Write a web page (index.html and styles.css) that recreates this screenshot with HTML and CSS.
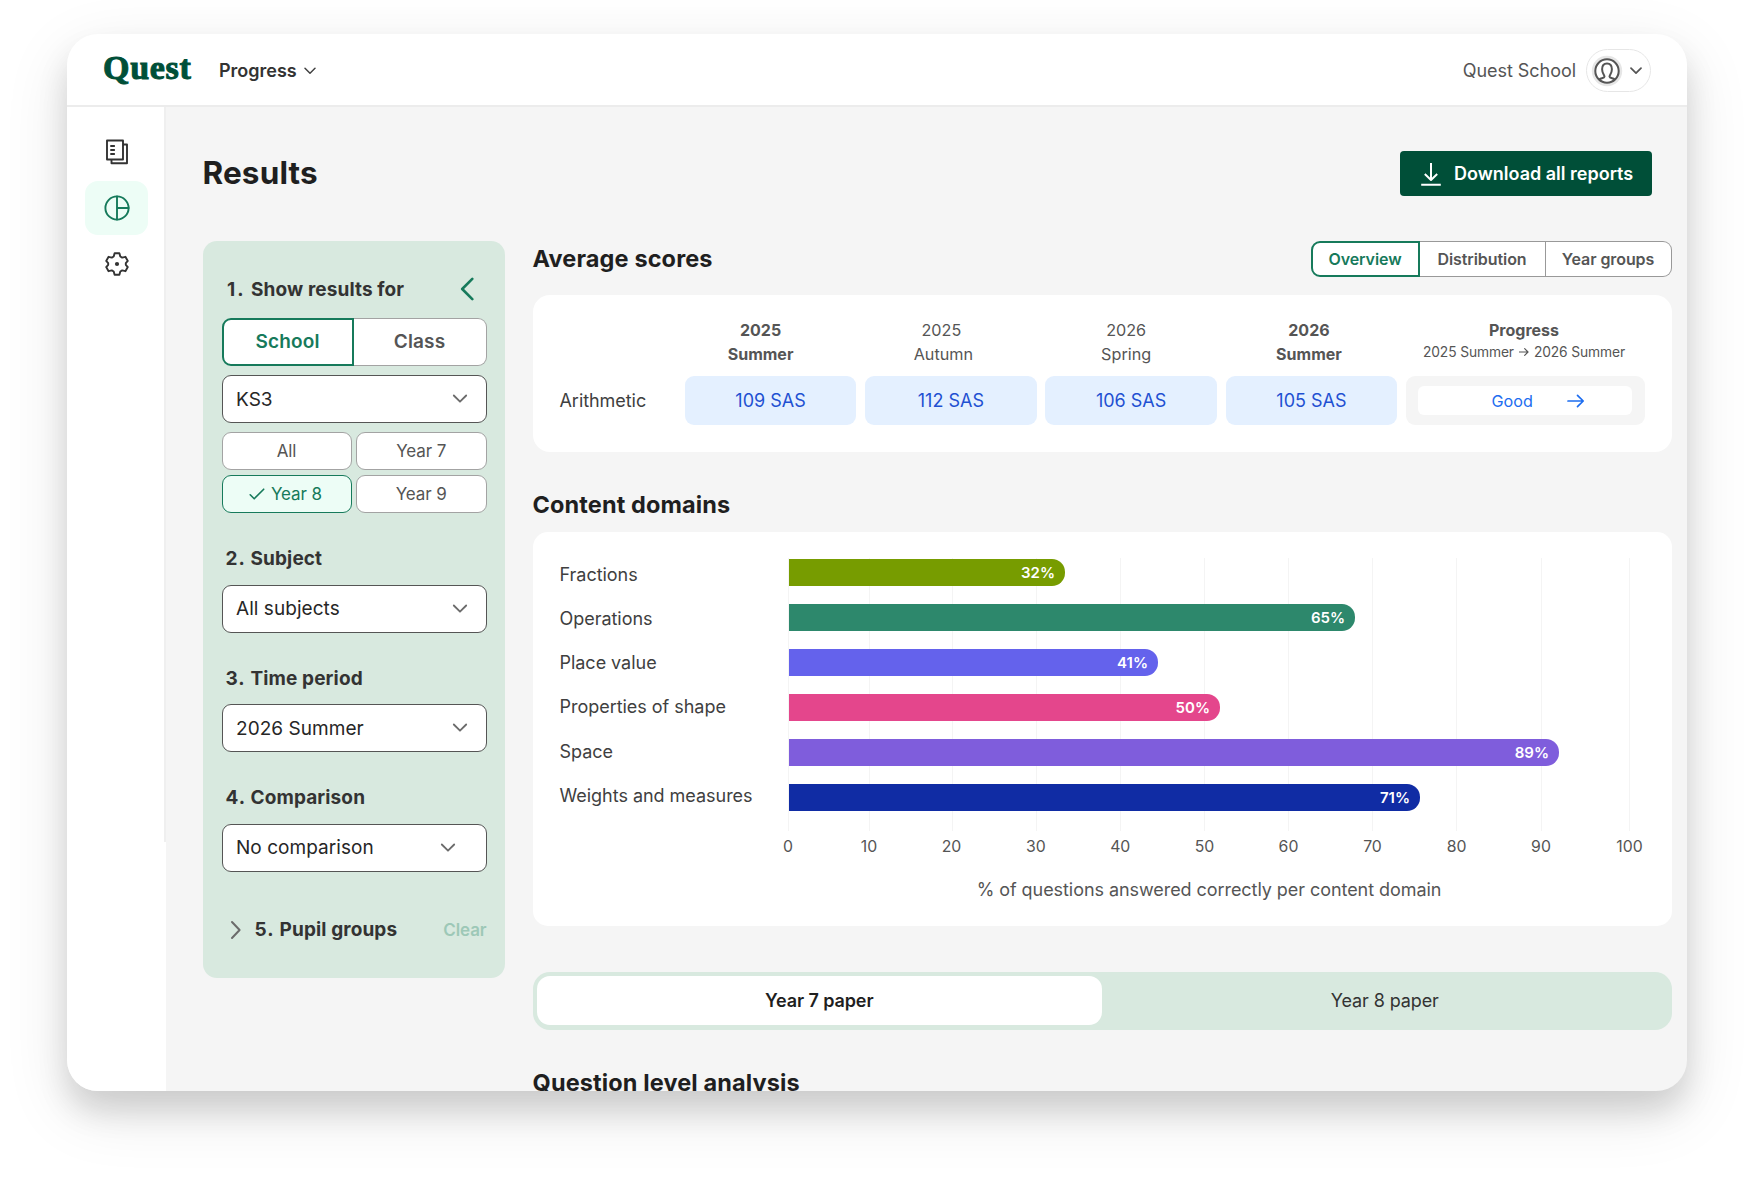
FILE: index.html
```html
<!DOCTYPE html>
<html lang="en">
<head>
<meta charset="utf-8">
<title>Quest – Results</title>
<link rel="stylesheet" href="styles.css">
</head>
<body>
<div class="window">
  <header class="topbar">
    <span class="logo">Quest</span>
    <span class="product">Progress</span>
    <svg class="product-chev" width="12" height="8" viewBox="0 0 12 8"><path d="M1 1.200l5 5 5-5"/></svg>
    <span class="school">Quest School</span>
    <div class="account">
      <svg width="32" height="32" viewBox="0 0 32 32"><circle class="halo" cx="16" cy="16" r="15.200"/><circle class="ring" cx="16" cy="16" r="11.700"/><path class="person" d="M8.600 24.200c1.200-1.200 4.700-1 4.900-2.600.1-1.300-2.400-3.200-2.400-7.400 0-3.700 1.900-5.800 4.900-5.800s4.900 2.100 4.900 5.800c0 4.200-2.500 6.100-2.400 7.400.2 1.600 3.700 1.400 4.900 2.600"/></svg>
      <svg class="account-chev" width="12" height="8" viewBox="0 0 12 8"><path d="M1 1.200l5 5 5-5"/></svg>
    </div>
  </header>
  <div class="body">
    <nav class="rail">
      <a class="rail-item"><svg width="24" height="26" viewBox="0 0 24 26"><path d="M2 1.500h16v19h-16zM18 5.500h4v18.800h-15.500v-3.800M6 7h3.200M6 11h3.200M6 15h3.200"/></svg></a>
      <a class="rail-item active"><svg width="26" height="26" viewBox="0 0 26 26"><circle cx="13" cy="13" r="11.600"/><path d="M13 1.400v23.200M13 13h11.600"/></svg></a>
      <a class="rail-item"><svg width="26" height="26" viewBox="0 0 26 26"><path d="M10.600 2.300h4.800l.9 3.200 1.900 1.100 3.200-.8 2.400 4.100-2 2.300v1.600l2 2.300-2.400 4.100-3.200-.8-1.900 1.100-.9 3.200h-4.800l-.9-3.200-1.900-1.100-3.200.8-2.400-4.100 2-2.300v-1.600l-2-2.300 2.400-4.100 3.200.8 1.900-1.100z"/><circle class="dot" cx="13" cy="13" r="2.100"/></svg></a>
    </nav>
    <div class="rail-edge"></div>
    <main class="content">
      <div class="title-row">
        <h1>Results</h1>
        <button class="download"><svg width="22" height="24" viewBox="0 0 22 24"><path d="M11 1v17M4.800 12l6.200 6 6.200-6M1.200 22.700h19.600"/></svg>Download all reports</button>
      </div>
      <div class="columns">
        <aside class="filters">
          <div class="step first"><b>1.</b><span>Show results for</span><svg width="14" height="24" viewBox="0 0 14 24"><path d="M12.300 1.800L2.200 12l10.100 10.200"/></svg></div>
          <div class="segmented"><span class="on">School</span><span>Class</span></div>
          <div class="select ks">KS3<svg width="16" height="10" viewBox="0 0 16 10"><path d="M1.800 1.500L8 7.700l6.200-6.200"/></svg></div>
          <div class="years">
            <span>All</span><span>Year 7</span>
            <span class="on"><svg width="16" height="12" viewBox="0 0 16 12"><path d="M1.200 6.800l4 4L14.700 1.200"/></svg>Year 8</span><span>Year 9</span>
          </div>
          <div class="step"><b>2.</b><span>Subject</span></div>
          <div class="select">All subjects<svg width="16" height="10" viewBox="0 0 16 10"><path d="M1.800 1.500L8 7.700l6.200-6.200"/></svg></div>
          <div class="step"><b>3.</b><span>Time period</span></div>
          <div class="select">2026 Summer<svg width="16" height="10" viewBox="0 0 16 10"><path d="M1.800 1.500L8 7.700l6.200-6.200"/></svg></div>
          <div class="step"><b>4.</b><span>Comparison</span></div>
          <div class="select inset">No comparison<svg width="16" height="10" viewBox="0 0 16 10"><path d="M1.800 1.500L8 7.700l6.200-6.200"/></svg></div>
          <div class="step groups"><svg width="12" height="20" viewBox="0 0 12 20"><path d="M2 2l7.600 8L2 18"/></svg><b>5.</b><span>Pupil groups</span><em>Clear</em></div>
        </aside>
        <div class="report">
          <div class="section-head">
            <h2>Average scores</h2>
            <div class="views"><span class="on">Overview</span><span>Distribution</span><span>Year groups</span></div>
          </div>
          <section class="card scores">
            <div></div>
            <div class="col c1 strong">2025<br>Summer</div>
            <div class="col c2"><span class="year">2025</span><br>Autumn</div>
            <div class="col c3">2026<br>Spring</div>
            <div class="col c4 strong">2026<br>Summer</div>
            <div class="col c5"><b>Progress</b><small>2025 Summer <svg width="12" height="10" viewBox="0 0 12 10"><path d="M.5 5h10.300M6.800 1l4 4-4 4"/></svg> 2026 Summer</small></div>
            <div class="row-name">Arithmetic</div>
            <div class="sas">109 SAS</div>
            <div class="sas">112 SAS</div>
            <div class="sas">106 SAS</div>
            <div class="sas">105 SAS</div>
            <div class="prog"><div class="good">Good<svg width="18" height="14" viewBox="0 0 18 14"><path d="M1 7h15M10.500 1.300L16.200 7l-5.700 5.700"/></svg></div></div>
          </section>
          <h2 class="domains-title">Content domains</h2>
          <section class="card domains">
            <div class="names"><span>Fractions</span><span>Operations</span><span>Place value</span><span>Properties of shape</span><span>Space</span><span>Weights and measures</span></div>
            <div class="chart">
              <div class="plot">
                <div class="bar olive" style="width:276px">32%</div>
                <div class="bar teal" style="width:566px">65%</div>
                <div class="bar indigo" style="width:369px">41%</div>
                <div class="bar pink" style="width:431px">50%</div>
                <div class="bar violet" style="width:770px">89%</div>
                <div class="bar navy" style="width:631px">71%</div>
              </div>
              <div class="axis"><span>0</span><span>10</span><span>20</span><span>30</span><span>40</span><span>50</span><span>60</span><span>70</span><span>80</span><span>90</span><span>100</span></div>
              <p class="caption">% of questions answered correctly per content domain</p>
            </div>
          </section>
          <div class="papers"><span class="on">Year 7 paper</span><span>Year 8 paper</span></div>
          <h2 class="qla">Question level analysis</h2>
        </div>
      </div>
    </main>
  </div>
</div>
</body>
</html>
```

FILE: styles.css
```css
* { box-sizing: border-box; }

body {
  margin: 0;
  padding: 34px 68px 0 67px;
  height: 1193px;
  overflow: hidden;
  background: #fff;
  font-family: Inter, "Liberation Sans", sans-serif;
  color: #333;
}

svg { display: block; flex: none; fill: none; stroke: currentColor; stroke-linecap: round; stroke-linejoin: round; }
h1, h2, p { margin: 0; }

.window {
  height: 1057px;
  display: flex;
  flex-direction: column;
  overflow: hidden;
  border-radius: 31px;
  background: #f5f5f5;
  box-shadow: 0 20px 30px rgba(0, 0, 0, .13), 0 20px 66px rgba(0, 0, 0, .11);
}

/* Top bar */
.topbar {
  flex: none;
  height: 73px;
  display: flex;
  align-items: center;
  padding: 2px 36px 0;
  background: #fff;
  border-bottom: 2px solid #ececec;
}
.logo {
  width: 116px;
  margin-top: -5px;
  font: bold 34px/40px "Liberation Serif", serif;
  letter-spacing: .7px;
  color: #004f38;
  -webkit-text-stroke: 1px #004f38;
}
.product { font-size: 18px; font-weight: 600; line-height: 24px; }
.product-chev { margin-left: 7px; stroke-width: 1.500; color: #444; }
.school { margin-left: auto; font-size: 18px; line-height: 24px; color: #555; letter-spacing: -.05px; }
.account {
  width: 65px;
  height: 43px;
  margin-left: 10px;
  padding-left: 4px;
  display: flex;
  align-items: center;
  border: 1px solid #e6e6e6;
  border-radius: 22px;
  color: #555;
}
.halo { fill: #e6e6e6; stroke: none; }
.ring { fill: #fff; stroke-width: 2; }
.person { stroke-width: 2; }
.account-chev { margin-left: 7px; stroke-width: 1.700; }

/* Navigation rail */
.body { flex: 1; min-height: 0; display: flex; }
.rail {
  width: 97px;
  padding: 18px 16px 0 18px;
  display: flex;
  flex-direction: column;
  gap: 2px;
  background: #fff;
}
.rail-edge { width: 2px; background: linear-gradient(#efefef 735px, #fff 735px); }
.rail-item {
  height: 54px;
  padding: 0 0 1px;
  display: flex;
  align-items: center;
  justify-content: center;
  border-radius: 13px;
}
.rail-item svg { stroke-width: 1.900; }
.rail-item.active { background: #edfdf6; color: #167a5b; }
.dot { fill: currentColor; stroke: none; }

/* Page */
.content { flex: 1; min-width: 0; padding: 44px 15.500px 0 36.500px; }
.title-row { display: flex; justify-content: space-between; padding-right: 19.500px; }
h1 { font-size: 31.500px; line-height: 44px; font-weight: 700; color: #1f1f1f; letter-spacing: .15px; }
.download {
  width: 252px;
  height: 45px;
  padding: 1px 0 0 20px;
  display: flex;
  align-items: center;
  gap: 12px;
  border: 0;
  border-radius: 4px;
  background: #004f38;
  color: #fff;
  font: 600 18px/24px Inter, sans-serif;
}
.download svg { stroke-width: 2; stroke-linecap: butt; }
.columns { display: flex; align-items: flex-start; gap: 27.500px; margin-top: 45px; }

/* Filter panel */
.filters {
  width: 302.500px;
  height: 737px;
  padding: 34px 18.500px 0 19px;
  border-radius: 14px;
  background: #d8e9df;
}
.step {
  height: 28px;
  margin: 31.500px 0 12.100px;
  padding: 1px 0 0 4px;
  display: flex;
  align-items: center;
  font-size: 19px;
  font-weight: 700;
  line-height: 28px;
  letter-spacing: .12px;
}
.step b { width: 25px; font-weight: 700; letter-spacing: 1px; }
.step.first { margin: 0 0 14.500px; padding: 1px 13px 0 5.500px; }
.step.first b { width: 24px; letter-spacing: 2px; }
.step.first svg { margin-left: auto; margin-top: -1px; color: #167a5b; stroke-width: 2.600; }
.step.groups { margin-top: 43.500px; padding-left: 8px; }
.step.groups svg { margin-right: 13px; color: #6b6b6b; stroke-width: 2; }
.step em { margin-left: auto; font-size: 17px; font-style: normal; font-weight: 600; letter-spacing: -.1px; color: #9dc8b7; }
.segmented { display: flex; height: 48px; margin-bottom: 9.500px; }
.segmented span {
  flex: 1;
  display: flex;
  align-items: center;
  justify-content: center;
  background: #fff;
  border: 1px solid #a3a3a3;
  border-left: 0;
  border-radius: 0 9px 9px 0;
  font-size: 19px;
  font-weight: 600;
  letter-spacing: .15px;
  color: #555;
}
.segmented .on { flex: none; width: 132px; border: 2px solid #167a5b; border-radius: 9px 0 0 9px; color: #167a5b; }
.select {
  height: 48px;
  padding: 0 18px 0 13.500px;
  display: flex;
  align-items: center;
  justify-content: space-between;
  background: #fff;
  border: 1px solid #555;
  border-radius: 9px;
  font-size: 19px;
  letter-spacing: .05px;
  color: #262626;
}
.select svg { stroke-width: 1.800; color: #6b6b6b; }
.select.inset { padding-right: 30px; }
.years { margin: 9px 0 31px; display: grid; grid-template-columns: 130px 130.500px; gap: 5px 4.500px; }
.years span {
  height: 38px;
  display: flex;
  align-items: center;
  justify-content: center;
  gap: 6px;
  background: #fff;
  border: 1px solid #a3a3a3;
  border-radius: 9px;
  font-size: 17px;
  letter-spacing: -.08px;
  color: #555;
}
.years .on { padding-right: 2px; background: #edfdf6; border-color: #167a5b; color: #167a5b; }
.years svg { stroke-width: 1.600; }

/* Report column */
.report { flex: 1; min-width: 0; }
h2 { font-size: 23.500px; line-height: 36px; font-weight: 700; color: #1f1f1f; letter-spacing: .12px; }
.section-head { display: flex; justify-content: space-between; height: 36px; }
.views { display: flex; }
.views span {
  width: 126px;
  display: flex;
  align-items: center;
  justify-content: center;
  background: #fff;
  border: 1px solid #999;
  border-left: 0;
  font-size: 16px;
  font-weight: 600;
  letter-spacing: -.08px;
  color: #555;
}
.views .on { width: 109px; border: 2px solid #167a5b; border-radius: 9px 0 0 9px; color: #167a5b; }
.views span:last-child { border-radius: 0 9px 9px 0; }
.card { background: #fff; border-radius: 17px; }

.scores {
  height: 157px;
  margin-top: 18px;
  padding: 23px 26.500px 0 27px;
  display: grid;
  grid-template-columns: 116.500px repeat(4, 171.500px) 239px;
  grid-template-rows: 48px 49px;
  column-gap: 8.800px;
  row-gap: 10px;
  color: #555;
}
.col { text-align: center; font-size: 16.200px; line-height: 24px; }
.col.strong, .col b { font-weight: 700; font-size: 16px; }
.col b { display: block; }
.c1 { padding-right: 20px; }
.c2 { padding-right: 15px; }
.c2 .year { margin-right: 4px; }
.c3 { padding-right: 10px; }
.c4 { padding-right: 5px; }
.c5 { padding-right: 3px; }
.col small { display: flex; align-items: center; justify-content: center; gap: 5px; font-size: 13.800px; line-height: 20px; letter-spacing: -.12px; white-space: nowrap; }
.col small svg { width: 10px; stroke-width: 1.400; }
.row-name { font-size: 18px; line-height: 50px; color: #404040; letter-spacing: -.05px; }
.sas { border-radius: 9px; background: #e4f0ff; color: #1f50d2; font-size: 18px; line-height: 50px; text-align: center; }
.prog { padding: 10px 12.500px; border-radius: 9px; background: #f5f5f5; }
.good {
  height: 29px;
  padding-left: 73px;
  display: flex;
  align-items: center;
  gap: 34px;
  border-radius: 6px;
  background: #fff;
  color: #1d6df0;
  font-size: 16.200px;
}
.good svg { stroke-width: 1.700; }

.domains-title { margin-top: 35px; }
.domains {
  height: 394px;
  margin-top: 9px;
  padding: 26px 0 0 27px;
  display: flex;
  border-radius: 15px;
}
.names { width: 228.500px; padding-top: 5px; display: flex; flex-direction: column; }
.names span { font-size: 18px; line-height: 24px; margin-bottom: 20.150px; color: #404040; letter-spacing: -.03px; }
.chart { width: 880px; }
.plot {
  --g: linear-gradient(#f4f4f4, #f4f4f4);
  height: 273px;
  padding: .5px 0 0 1px;
  display: flex;
  flex-direction: column;
  gap: 18px;
  background-image: var(--g), var(--g), var(--g), var(--g), var(--g), var(--g), var(--g), var(--g), var(--g), var(--g), var(--g);
  background-repeat: no-repeat;
  background-size: 1px 100%;
  background-position: 0 0, 81px 0, 164px 0, 248px 0, 332px 0, 416px 0, 500px 0, 584px 0, 668px 0, 753px 0, 841px 0;
}
.bar {
  height: 27px;
  padding-right: 10px;
  border-radius: 0 13px 13px 0;
  color: #fff;
  font-size: 15px;
  font-weight: 600;
  line-height: 28px;
  text-align: right;
}
.olive { background: #779c00; }
.teal { background: #2d886c; }
.indigo { background: #6462ec; }
.pink { background: #e4468c; }
.violet { background: #7f5ddc; }
.navy { background: #102ca4; }
.axis {
  display: grid;
  grid-template-columns: 81px 81px 84px 84.500px 84.500px 84px 84px 84px 84px 85px 92px;
  margin: 6px 0 0 -40.500px;
  font-size: 15.800px;
  line-height: 20px;
  color: #555;
  text-align: center;
}
.caption { width: 842px; margin-top: 21px; font-size: 18px; line-height: 24px; letter-spacing: -.06px; color: #555; text-align: center; }

.papers {
  height: 58px;
  margin-top: 45.500px;
  padding: 4.500px 4px;
  display: flex;
  border-radius: 17px;
  background: #d8e9df;
}
.papers span { flex: 1; font-size: 18px; line-height: 50px; text-align: center; letter-spacing: -.1px; }
.papers .on { background: #fff; border-radius: 13px; font-weight: 600; color: #1f1f1f; }
.qla { margin-top: 35px; }
```
